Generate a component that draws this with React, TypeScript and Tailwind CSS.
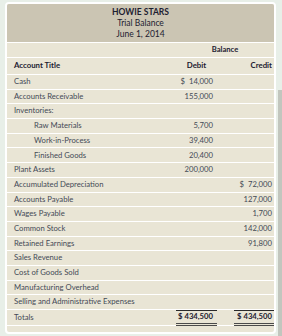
import React from "react";

type Row = { label: string; debit?: string; credit?: string; indent?: boolean };

const rows: Row[] = [
  { label: "Cash", debit: "$  14,000" },
  { label: "Accounts Receivable", debit: "155,000" },
  { label: "Inventories:" },
  { label: "Raw Materials", debit: "5,700", indent: true },
  { label: "Work-in-Process", debit: "39,400", indent: true },
  { label: "Finished Goods", debit: "20,400", indent: true },
  { label: "Plant Assets", debit: "200,000" },
  { label: "Accumulated Depreciation", credit: "$  72,000" },
  { label: "Accounts Payable", credit: "127,000" },
  { label: "Wages Payable", credit: "1,700" },
  { label: "Common Stock", credit: "142,000" },
  { label: "Retained Earnings", credit: "91,800" },
  { label: "Sales Revenue" },
  { label: "Cost of Goods Sold" },
  { label: "Manufacturing Overhead" },
  { label: "Selling and Administrative Expenses" },
];

export default function App() {
  return (
    <div
      className="w-[282px] h-[336px] bg-[#e8efe8] flex overflow-hidden"
      style={{ fontFamily: "Lato, 'Open Sans', sans-serif" }}
    >
      <div className="ml-[5px] mt-[2px] w-[271px] h-[332px] rounded-[4px] border-2 border-white bg-[#e9e5d5] flex flex-col overflow-hidden">
        <div className="h-[39px] bg-[#cbc5b3] flex flex-col items-center justify-center text-[8.5px] leading-[11px] text-[#1c2030] border-b border-white">
          <div className="font-bold">HOWIE STARS</div>
          <div>Trial Balance</div>
          <div>June 1, 2014</div>
        </div>
        <div className="h-[15px] flex items-center border-b border-white text-[7.6px] font-bold text-[#1c2030]">
          <div className="flex-1" />
          <div className="w-[98px] text-center">Balance</div>
        </div>
        <div className="h-[17px] flex items-center border-b border-white text-[7.8px] font-bold text-[#1c2030]">
          <div className="flex-1 pl-[7px]">Account Title</div>
          <div className="w-[41px] text-center">Debit</div>
          <div className="w-[17px]" />
          <div className="w-[40px] text-right pr-[2px]">Credit</div>
        </div>
        {rows.map((r) => (
          <div
            key={r.label}
            className="h-[14.7px] flex items-center border-b border-white text-[7.7px] text-[#444a56] shrink-0"
          >
            <div className={r.indent ? "flex-1 pl-[27px]" : "flex-1 pl-[7px]"}>{r.label}</div>
            <div className="w-[41px] text-right pr-[4px] whitespace-pre">{r.debit ?? ""}</div>
            <div className="w-[17px]" />
            <div className="w-[40px] text-right pr-[2px] whitespace-pre">{r.credit ?? ""}</div>
          </div>
        ))}
        <div className="h-[16px] flex items-stretch text-[7.7px] text-[#444a56] shrink-0">
          <div className="flex-1 pl-[7px] flex items-center border-b border-white">Totals</div>
          <div className="w-[41px] text-right pr-[4px] flex items-center justify-end font-bold text-[#1c2030] border-t border-[#2a2a2a] border-b-[3px] border-b-[#4a4a4a] border-double">
            $ 434,500
          </div>
          <div className="w-[17px] border-b border-white" />
          <div className="w-[40px] text-right pr-[2px] flex items-center justify-end font-bold text-[#1c2030] border-t border-[#2a2a2a] border-b-[3px] border-b-[#4a4a4a] border-double">
            $ 434,500
          </div>
        </div>
        <div className="flex-1" />
      </div>
      <div className="w-[2px]" />
      <div className="w-[4px] mt-[90px] bg-[#c2c6be]" />
    </div>
  );
}
